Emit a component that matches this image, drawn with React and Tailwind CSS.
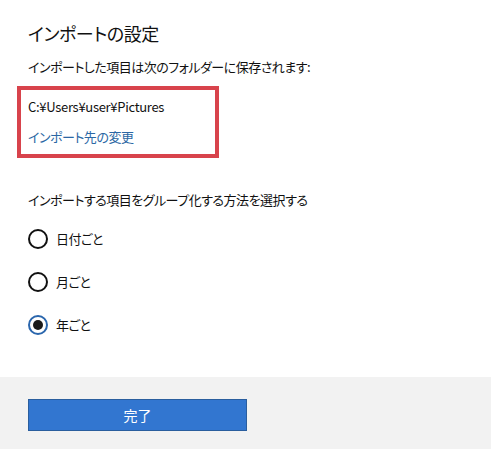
import React, { useState } from "react";

const font = {
  fontFamily: '"Noto Sans CJK JP", "Noto Sans", sans-serif',
};

function Radio({ label, checked, onClick }) {
  return (
    <div className="flex items-center h-[20px] cursor-pointer" onClick={onClick}>
      <div
        className={`w-[20px] h-[20px] rounded-full border-2 flex items-center justify-center ${
          checked ? "border-[#2a66ad]" : "border-[#111]"
        }`}
      >
        {checked ? <div className="w-[10px] h-[10px] rounded-full bg-[#1a1a1a]" /> : null}
      </div>
      <div className="ml-[8px] text-[13px] leading-[20px] tracking-[-0.5px] text-[#111]">{label}</div>
    </div>
  );
}

export default function App() {
  const [group, setGroup] = useState("year");
  return (
    <div className="w-[491px] h-[449px] flex flex-col bg-white [font-feature-settings:'palt']" style={font}>
      <div className="h-[377px] px-[28px] pt-[19px]">
        <div className="text-[18px] leading-[28px] tracking-[-0.4px] text-[#111]">インポートの設定</div>
        <div className="mt-[10px] text-[13px] leading-[20px] tracking-[-0.5px] text-[#111]">
          インポートした項目は次のフォルダーに保存されます:
        </div>
        <div className="mt-[9px] -ml-[11px] w-[202px] border-4 border-[#d8434c] pl-[7px] pt-[7px] pb-[7px]">
          <div className="text-[13px] leading-[20px] tracking-[-0.3px] text-[#111]">C:¥Users¥user¥Pictures</div>
          <div className="mt-[10px] text-[13px] leading-[20px] tracking-[-0.5px] text-[#2b67a4]">インポート先の変更</div>
        </div>
        <div className="mt-[32px] text-[13px] leading-[20px] tracking-[-0.5px] text-[#111]">
          インポートする項目をグループ化する方法を選択する
        </div>
        <div className="mt-[19px] flex flex-col gap-[23px]">
          <Radio label="日付ごと" checked={group === "day"} onClick={() => setGroup("day")} />
          <Radio label="月ごと" checked={group === "month"} onClick={() => setGroup("month")} />
          <Radio label="年ごと" checked={group === "year"} onClick={() => setGroup("year")} />
        </div>
      </div>
      <div className="flex-1 bg-[#f2f2f2] px-[28px] pt-[22px]">
        <button className="w-[219px] h-[32px] bg-[#3276d0] border border-[#2a5e9e] text-white text-[14px] leading-[20px]">
          完了
        </button>
      </div>
    </div>
  );
}
